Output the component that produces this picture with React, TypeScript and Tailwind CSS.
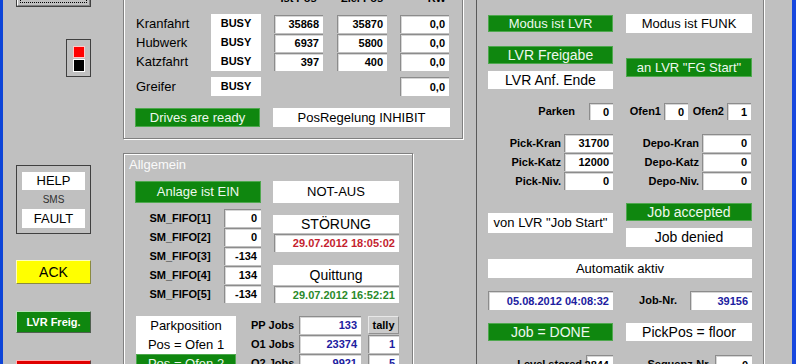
import React from 'react';

const green = 'bg-[#0f870f] border border-[#4fa84f] text-[#eef8ee] flex items-center justify-center text-[13px]';
const white = 'bg-white flex items-center justify-center text-[13px] text-black';
const field =
  'bg-white border-t border-l border-[#8c8c8c] shadow-[inset_1px_1px_0_#d6d6d6] flex items-center justify-end pr-[4px] text-[11px] font-bold';
const etched = 'border border-[#808080] shadow-[1px_1px_0_#ffffff,inset_1px_1px_0_#ffffff]';
const lbl = 'text-[11px] font-bold text-black';

const drives = [
  ['Kranfahrt', '35868', '35870', '0,0'],
  ['Hubwerk', '6937', '5800', '0,0'],
  ['Katzfahrt', '397', '400', '0,0'],
];
const fifo = ['0', '0', '-134', '134', '-134'];
const jobs = [
  ['PP Jobs', '133', 'tally'],
  ['O1 Jobs', '23374', '1'],
  ['O2 Jobs', '9921', '5'],
];
const picks = [
  ['Pick-Kran', '31700', 'Depo-Kran', '0'],
  ['Pick-Katz', '12000', 'Depo-Katz', '0'],
  ['Pick-Niv.', '0', 'Depo-Niv.', '0'],
];

function LeftColumn() {
  return (
    <div className="w-[117px] shrink-0 pl-[13px] flex flex-col">
      <div className="shrink-0 mt-[-18px] h-[25px] w-[75px] border border-[#404040] bg-[#c0c0c0]">
        <div className="h-full w-full border-t border-l border-white border-b border-r border-b-[#808080] border-r-[#808080] p-[2px]">
          <div className="h-full w-full border border-dotted border-black" />
        </div>
      </div>
      <div className="shrink-0 ml-[50px] mt-[32px] h-[38px] w-[25px] border border-[#404040] flex flex-col items-center pt-[6px] gap-[1px]">
        <div className="h-[12px] w-[12px] bg-[#ff0000] border border-[#ffc8c8]" />
        <div className="h-[13px] w-[12px] bg-black border border-white" />
      </div>
      <div className="shrink-0 mt-[88px] h-[69px] w-[75px] border border-[#404040] px-[5px] pt-[6px]">
        <div className={`${white} h-[18px]`}>HELP</div>
        <div className="h-[19px] text-[10px] text-[#303030] flex items-center justify-center">SMS</div>
        <div className={`${white} h-[19px]`}>FAULT</div>
      </div>
      <div className="shrink-0 mt-[26px] h-[24px] w-[75px] bg-[#ffff00] border border-t-[#ffffb8] border-l-[#ffffb8] border-b-[#8a8a40] border-r-[#8a8a40] flex items-center justify-center text-[14px] text-black">
        ACK
      </div>
      <div className="shrink-0 mt-[27px] h-[22px] w-[75px] bg-[#0f870f] border border-t-[#b8e0b8] border-l-[#b8e0b8] border-b-[#506050] border-r-[#506050] flex items-center justify-center text-[11px] font-bold text-white">
        LVR Freig.
      </div>
      <div className="shrink-0 mt-[27px] h-[24px] w-[75px] bg-[#e00000] border border-t-[#ffb0b0] border-l-[#ffb0b0] border-b-[#604040] border-r-[#604040]" />
    </div>
  );
}

function DrivePanel() {
  return (
    <div className={`${etched} ml-[3px] mt-[-20px] h-[159px] w-[340px] shrink-0 pl-[12px] pt-[11px]`}>
      <div className={`${lbl} flex h-[13px] leading-[13px]`}>
        <div className="w-[125px]" />
        <div className="ml-[13px] w-[49px] text-center">Ist Pos</div>
        <div className="ml-[14px] w-[50px] text-center">Ziel Pos</div>
        <div className="ml-[13px] w-[49px] text-right pr-[3px]">RW</div>
      </div>
      <div className="mt-[9px] flex flex-col">
        {drives.map(([name, ist, ziel, rw]) => (
          <div key={name} className="flex h-[19px] items-start">
            <div className="w-[75px] h-full flex items-center text-[13px]">{name}</div>
            <div className={`${lbl} w-[50px] h-full bg-white flex items-center justify-center`}>BUSY</div>
            <div className={`${field} ml-[13px] mt-[1px] h-[18px] w-[49px]`}>{ist}</div>
            <div className={`${field} ml-[14px] mt-[1px] h-[18px] w-[50px]`}>{ziel}</div>
            <div className={`${field} ml-[13px] mt-[1px] h-[18px] w-[49px]`}>{rw}</div>
          </div>
        ))}
      </div>
      <div className="mt-[6px] flex h-[19px]">
        <div className="w-[75px] h-full flex items-center text-[13px]">Greifer</div>
        <div className={`${lbl} w-[50px] h-full bg-white flex items-center justify-center`}>BUSY</div>
        <div className="ml-[13px] w-[49px]" />
        <div className="ml-[14px] w-[50px]" />
        <div className={`${field} ml-[13px] h-[19px] w-[49px]`}>0,0</div>
      </div>
      <div className="mt-[12px] flex h-[19px]">
        <div className={`${green} w-[125px] -ml-[1px]`}>Drives are ready</div>
        <div className={`${white} ml-[13px] w-[177px]`}>PosRegelung INHIBIT</div>
      </div>
    </div>
  );
}

function GeneralPanel() {
  return (
    <div className={`${etched} ml-[3px] mt-[14px] h-[240px] w-[290px] shrink-0`}>
      <div className="pl-[5px] pt-[3px] h-[18px] text-[13px] leading-[15px] text-[#fafafa]">Allgemein</div>
      <div className="pl-[12px]">
        <div className="mt-[9px] flex">
          <div className="w-[125px] flex flex-col">
            <div className={`${green} h-[22px] -ml-[1px]`}>Anlage ist EIN</div>
            <div className="mt-[6px] flex flex-col">
              {fifo.map((v, i) => (
                <div key={i} className="flex h-[19px] items-start">
                  <div className={`${lbl} w-[88px] h-full flex items-center justify-center`}>SM_FIFO[{i + 1}]</div>
                  <div className={`${field} h-[18px] w-[37px]`}>{v}</div>
                </div>
              ))}
            </div>
          </div>
          <div className="ml-[12px] w-[126px] flex flex-col">
            <div className={`${white} h-[22px]`}>NOT-AUS</div>
            <div className={`${white} mt-[12px] h-[18px] text-[14px]`}>STÖRUNG</div>
            <div className={`${field} mt-[1px] ml-[1px] h-[18px] justify-center pr-0 text-[#c41e2e]`}>29.07.2012 18:05:02</div>
            <div className={`${white} mt-[13px] h-[20px] text-[14px]`}>Quittung</div>
            <div className={`${field} mt-[1px] ml-[1px] h-[17px] justify-center pr-0 text-[#2a8a2a]`}>29.07.2012 16:52:21</div>
          </div>
        </div>
        <div className="mt-[12px] flex">
          <div className="w-[100px] flex flex-col text-[13.5px]">
            <div className={`${white} h-[19px] text-[13.5px]`}>Parkposition</div>
            <div className={`${white} h-[19px] text-[13.5px]`}>Pos = Ofen 1</div>
            <div className={`${green} h-[19px] text-[13.5px]`}>Pos = Ofen 2</div>
          </div>
          <div className="ml-[15px] flex flex-col">
            {jobs.map(([name, v, t], i) => (
              <div key={name} className="flex h-[19px] items-start">
                <div className={`${lbl} w-[48px] h-[18px] flex items-center`}>{name}</div>
                <div className={`${field} h-[18px] w-[62px] text-[#2020a0]`}>{v}</div>
                {i === 0 ? (
                  <div className={`${lbl} ml-[7px] h-[18px] w-[31px] bg-[#cacaca] border border-t-[#e8e8e8] border-l-[#e8e8e8] border-b-[#909090] border-r-[#909090] flex items-center justify-center`}>
                    {t}
                  </div>
                ) : (
                  <div className={`${field} ml-[7px] h-[18px] w-[31px] justify-center pr-0 text-[#2020a0]`}>{t}</div>
                )}
              </div>
            ))}
          </div>
        </div>
      </div>
    </div>
  );
}

function RightPanel() {
  return (
    <div className="w-[288px] shrink-0 h-[364px] border-l border-[#5a5a5a] border-r border-r-[#808080] shadow-[1px_0_0_#ffffff] pl-[11px] pt-[14px] flex flex-col">
      <div className="shrink-0 flex items-start">
        <div className={`${green} mt-[1px] h-[17px] w-[125px]`}>Modus ist LVR</div>
        <div className={`${white} ml-[13px] h-[19px] w-[126px]`}>Modus ist FUNK</div>
      </div>
      <div className="shrink-0 mt-[13px] flex items-start">
        <div className="w-[125px] flex flex-col">
          <div className={`${green} h-[18px] text-[14px]`}>LVR Freigabe</div>
          <div className={`${white} mt-[7px] h-[18px] text-[14px]`}>LVR Anf. Ende</div>
        </div>
        <div className={`${green} ml-[13px] mt-[12px] h-[19px] w-[126px]`}>an LVR "FG Start"</div>
      </div>
      <div className="shrink-0 mt-[14px] flex h-[17px] items-center">
        <div className="w-[125px] flex justify-end items-center">
          <span className={`${lbl} mr-[14px]`}>Parken</span>
          <div className={`${field} h-[17px] w-[24px] justify-center pr-0`}>0</div>
        </div>
        <div className="ml-[13px] flex items-center">
          <span className={`${lbl} w-[38px] text-right pr-[3px]`}>Ofen1</span>
          <div className={`${field} h-[17px] w-[24px] justify-center pr-0`}>0</div>
          <span className={`${lbl} w-[39px] text-right pr-[3px]`}>Ofen2</span>
          <div className={`${field} h-[17px] w-[24px] justify-center pr-0`}>1</div>
        </div>
      </div>
      <div className="shrink-0 mt-[14px] flex flex-col">
        {picks.map(([a, av, b, bv]) => (
          <div key={a} className="flex h-[19px] items-start">
            <span className={`${lbl} w-[76px] h-[18px] flex items-center justify-end pr-[3px]`}>{a}</span>
            <div className={`${field} h-[18px] w-[49px]`}>{av}</div>
            <span className={`${lbl} ml-[13px] w-[76px] h-[18px] flex items-center justify-end pr-[3px]`}>{b}</span>
            <div className={`${field} h-[18px] w-[49px]`}>{bv}</div>
          </div>
        ))}
      </div>
      <div className="shrink-0 mt-[12px] flex items-start">
        <div className={`${white} mt-[10px] h-[20px] w-[125px]`}>von LVR "Job Start"</div>
        <div className="ml-[13px] w-[126px] flex flex-col">
          <div className={`${green} h-[18px] text-[14px]`}>Job accepted</div>
          <div className={`${white} mt-[7px] h-[19px] text-[14px]`}>Job denied</div>
        </div>
      </div>
      <div className={`${white} shrink-0 mt-[12px] h-[19px] w-[264px]`}>Automatik aktiv</div>
      <div className="shrink-0 mt-[13px] flex h-[19px] items-center">
        <div className={`${field} h-[19px] w-[125px] justify-center pr-0 text-[#2020a0]`}>05.08.2012 04:08:32</div>
        <span className={`${lbl} ml-[13px] w-[64px] text-center`}>Job-Nr.</span>
        <div className={`${field} h-[19px] w-[62px] text-[#2020a0]`}>39156</div>
      </div>
      <div className="shrink-0 mt-[13px] flex h-[18px]">
        <div className={`${green} w-[125px] text-[14px]`}>Job = DONE</div>
        <div className={`${white} ml-[13px] w-[126px] text-[14px]`}>PickPos = floor</div>
      </div>
      <div className="shrink-0 mt-[14px] flex h-[19px] items-start">
        <div className="w-[125px] flex justify-end items-start">
          <span className={`${lbl} mr-[4px] leading-[18px]`}>Level stored</span>
          <div className={`${field} h-[19px] w-[27px] justify-center pr-0`}>2844</div>
        </div>
        <div className="ml-[13px] w-[126px] flex justify-end items-start">
          <span className={`${lbl} mr-[4px] leading-[18px]`}>Sequenz-Nr.</span>
          <div className={`${field} h-[19px] w-[37px]`}>0</div>
        </div>
      </div>
    </div>
  );
}

export default function App() {
  return (
    <div className="flex h-[364px] w-[796px] overflow-hidden bg-[#c0c0c0] text-black font-['Liberation_Sans',Arial,sans-serif]">
      <div className="w-[3px] shrink-0 bg-[#0d44d8]" />
      <LeftColumn />
      <div className="w-[356px] shrink-0 flex flex-col">
        <DrivePanel />
        <GeneralPanel />
      </div>
      <RightPanel />
      <div className="w-[28px] shrink-0" />
      <div className="w-[4px] shrink-0 bg-[#1747de]" />
    </div>
  );
}
